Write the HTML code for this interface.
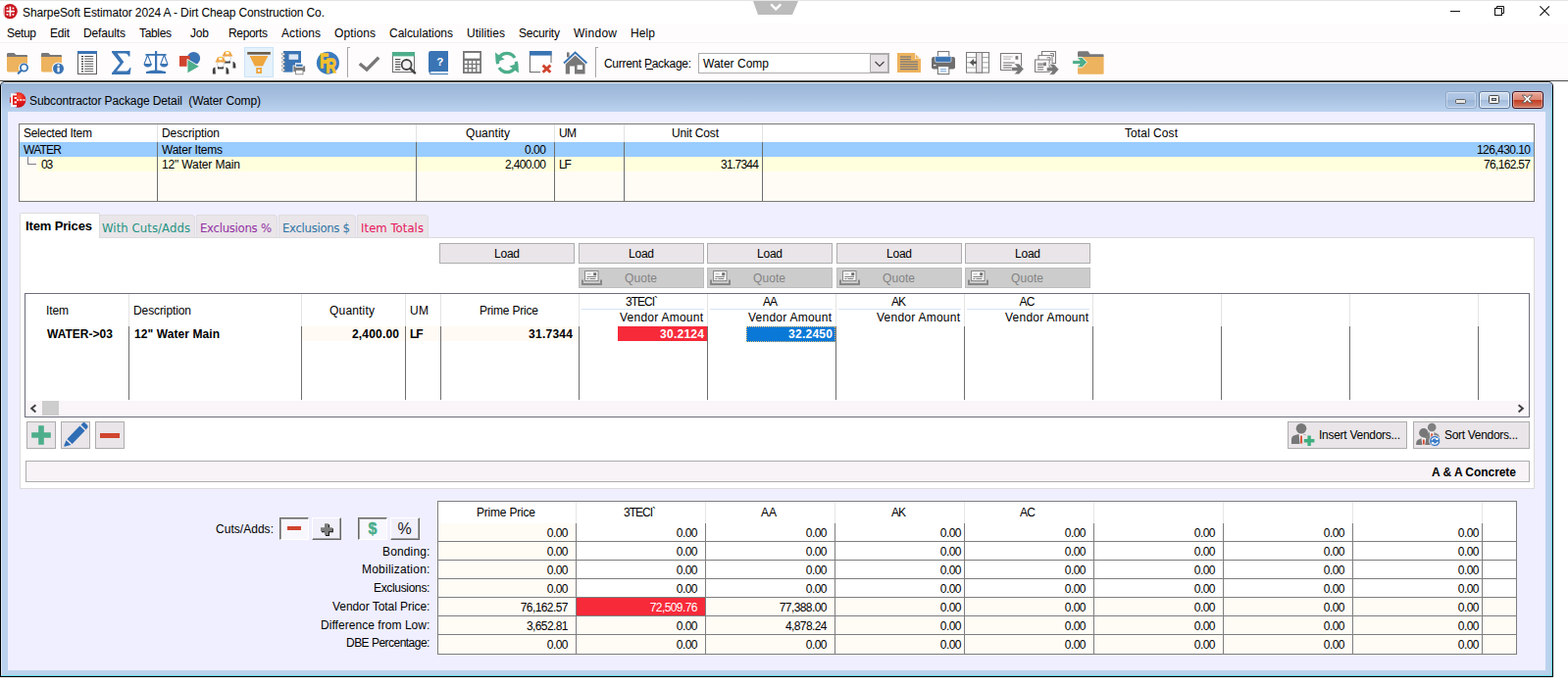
<!DOCTYPE html>
<html lang="en">
<head>
<meta charset="utf-8">
<title>SharpeSoft Estimator 2024 A - Dirt Cheap Construction Co.</title>
<style>
html,body{margin:0;padding:0;}
body{width:1599px;height:700px;overflow:hidden;background:#fff;position:relative;font-family:'Liberation Sans', sans-serif;font-size:12px;color:#000;}
body>div,body>svg,body>span{position:absolute;box-sizing:border-box;}
.t{white-space:pre;display:block;}
svg{overflow:visible;}
</style>
</head>
<body>
<div style="left:0px;top:0px;width:1599px;height:1px;background:#e4e6e4;"></div>
<svg style="left:766px;top:1px;" width="50" height="15" viewBox="0 0 50 15"><polygon points="2,0 48,0 42,14 7,14" fill="#bcbcbc"/><polyline points="20.2,3.4 25.2,8.4 30.2,3.4" fill="none" stroke="#fff" stroke-width="2.4"/></svg>
<svg style="left:2px;top:3px;" width="16" height="17" viewBox="0 0 16 17"><circle cx="8.2" cy="8.6" r="7.6" fill="#c8161d"/><rect x="0" y="0" width="1.6" height="17" fill="#fff"/><rect x="1.6" y="3" width="1.2" height="11" fill="#fff" opacity="0.7"/><rect x="4.4" y="7.8" width="8.6" height="1.6" fill="#fff"/><rect x="7.6" y="3.6" width="1.6" height="10" fill="#fff"/><rect x="4.6" y="4.6" width="1.7" height="1.7" fill="#fff"/><rect x="4.6" y="11" width="1.7" height="1.7" fill="#fff"/><rect x="10.6" y="4.6" width="1.7" height="1.7" fill="#fff"/><rect x="10.6" y="11" width="1.7" height="1.7" fill="#fff"/></svg>
<span class="t" style="left:23.00px;top:6px;font-size:12px;line-height:14px;letter-spacing:-0.122px;">SharpeSoft Estimator 2024 A - Dirt Cheap Construction Co.</span>
<div style="left:1479px;top:11px;width:10px;height:1px;background:#111;"></div>
<svg style="left:1524px;top:6px;" width="10" height="10" viewBox="0 0 10 10"><rect x="0.5" y="2.5" width="7" height="7" fill="none" stroke="#111"/><polyline points="2.5,2.5 2.5,0.5 9.5,0.5 9.5,7.5 7.5,7.5" fill="none" stroke="#111"/></svg>
<svg style="left:1570px;top:6px;" width="10" height="10" viewBox="0 0 10 10"><path d="M0.4,0.4 L9.9,9.9 M9.9,0.4 L0.4,9.9" stroke="#111" stroke-width="1.1" fill="none"/></svg>
<div style="left:0px;top:24px;width:1599px;height:58px;background:#fffcfd;"></div>
<div style="left:0px;top:43px;width:1599px;height:1px;background:#f6f2f4;"></div>
<span class="t" style="left:7.00px;top:27px;font-size:12px;line-height:14px;letter-spacing:-0.340px;">Setup</span>
<span class="t" style="left:51.00px;top:27px;font-size:12px;line-height:14px;letter-spacing:-0.229px;">Edit</span>
<span class="t" style="left:85.00px;top:27px;font-size:12px;line-height:14px;letter-spacing:-0.147px;">Defaults</span>
<span class="t" style="left:142.00px;top:27px;font-size:12px;line-height:14px;letter-spacing:-0.338px;">Tables</span>
<span class="t" style="left:194.00px;top:27px;font-size:12px;line-height:14px;letter-spacing:-0.180px;">Job</span>
<span class="t" style="left:233.00px;top:27px;font-size:12px;line-height:14px;letter-spacing:-0.339px;">Reports</span>
<span class="t" style="left:287.00px;top:27px;font-size:12px;line-height:14px;letter-spacing:0.107px;">Actions</span>
<span class="t" style="left:341.00px;top:27px;font-size:12px;line-height:14px;letter-spacing:0.107px;">Options</span>
<span class="t" style="left:397.00px;top:27px;font-size:12px;line-height:14px;letter-spacing:-0.034px;">Calculations</span>
<span class="t" style="left:476.00px;top:27px;font-size:12px;line-height:14px;letter-spacing:0.041px;">Utilities</span>
<span class="t" style="left:529.00px;top:27px;font-size:12px;line-height:14px;letter-spacing:-0.194px;">Security</span>
<span class="t" style="left:585.00px;top:27px;font-size:12px;line-height:14px;letter-spacing:0.263px;">Window</span>
<span class="t" style="left:643.00px;top:27px;font-size:12px;line-height:14px;letter-spacing:0.104px;">Help</span>
<div style="left:354px;top:48px;width:1px;height:31px;background:#a9a5a7;"></div>
<div style="left:355px;top:48px;width:2px;height:1px;background:#a9a5a7;"></div>
<div style="left:355px;top:49px;width:1px;height:30px;background:#fff;"></div>
<div style="left:607px;top:48px;width:1px;height:31px;background:#a9a5a7;"></div>
<div style="left:608px;top:48px;width:2px;height:1px;background:#a9a5a7;"></div>
<div style="left:608px;top:49px;width:1px;height:30px;background:#fff;"></div>
<span class="t" style="left:616.00px;top:58px;font-size:12px;line-height:14px;letter-spacing:-0.293px;">Current Package:</span>
<div style="left:659px;top:70px;width:7px;height:1px;background:#000;"></div>
<div style="left:712px;top:54px;width:195px;height:21px;background:#fff;border:1px solid #adadad;"></div>
<div style="left:887px;top:54px;width:20px;height:21px;background:#e6e2e5;border:2px solid #adadad;border-left-width:1px;"></div>
<svg style="left:891px;top:60.5px;" width="12" height="9" viewBox="0 0 12 9"><polyline points="1.5,2 6,6.5 10.5,2" fill="none" stroke="#444" stroke-width="1.2"/></svg>
<span class="t" style="left:717.00px;top:58px;font-size:12px;line-height:14px;letter-spacing:0.010px;">Water Comp</span>
<div style="left:0px;top:82px;width:1599px;height:1px;background:#4a4a4a;"></div>
<div style="left:0px;top:83px;width:1584px;height:608px;background:#bbd2ee;border:1px solid #000;border-top-color:#2e2e2e;border-radius:5px 5px 0 0;"></div>
<div style="left:1px;top:84px;width:1582px;height:30px;background:linear-gradient(#99b5d6,#a6bfdf 45%,#bad2ee);border-radius:4px 4px 0 0;"></div>
<div style="left:1px;top:689px;width:1582px;height:1px;background:#58d6f2;"></div>
<div style="left:1582px;top:90px;width:1px;height:600px;background:linear-gradient(rgba(88,214,242,0.3),#58d6f2 30px);"></div>
<div style="left:4px;top:84px;width:1576px;height:1px;background:rgba(255,255,255,0.92);"></div>
<div style="left:1px;top:88px;width:1px;height:601px;background:rgba(255,255,255,0.45);"></div>
<div style="left:8px;top:114px;width:1568px;height:570px;background:#efefff;"></div>
<svg style="left:10px;top:94px;" width="17" height="17" viewBox="0 0 17 17"><defs><radialGradient id="cg" cx="0.55" cy="0.3" r="0.7"><stop offset="0" stop-color="#ff5a3a"/><stop offset="0.5" stop-color="#e31a1a"/><stop offset="1" stop-color="#c80f14"/></radialGradient></defs><circle cx="8.6" cy="8" r="7.8" fill="url(#cg)"/><rect x="1" y="1.4" width="6" height="13.6" fill="#fff"/><rect x="3" y="3.4" width="4" height="9.6" fill="#e01818"/><rect x="4.6" y="5" width="2.4" height="2" fill="#fff"/><rect x="4.6" y="9.4" width="2.4" height="2" fill="#fff"/><path d="M7,8 L16.4,8" stroke="#fff" stroke-width="1.3" stroke-dasharray="2.2 1"/><rect x="0" y="5.4" width="1" height="5.6" fill="#e01818"/></svg>
<span class="t" style="left:30.00px;top:96px;font-size:12px;line-height:14px;letter-spacing:-0.106px;">Subcontractor Package Detail  (Water Comp)</span>
<div style="left:1474px;top:93px;width:32px;height:18px;border:1px solid #8fa9c9;border-radius:3px;background:linear-gradient(#b3c9e6 0%,#a9c1e0 48%,#9bb5d7 52%,#adc5e3 100%);box-shadow:inset 0 0 0 1px rgba(255,255,255,.4);"></div>
<div style="left:1484px;top:101px;width:11px;height:5px;background:#e6e6e6;border:1px solid #5f5f5f;border-radius:1.5px;"></div>
<div style="left:1508px;top:93px;width:32px;height:18px;border:1px solid #5f7898;border-radius:3px;background:linear-gradient(#cfdef0 0%,#bdd0e8 48%,#a3bbdb 52%,#c0d4ec 100%);box-shadow:inset 0 0 0 1px rgba(255,255,255,.65);"></div>
<div style="left:1518px;top:97px;width:11px;height:9px;background:#f4f4f4;border:1px solid #4a4a4a;border-radius:1.5px;"></div>
<div style="left:1521px;top:100px;width:5px;height:3px;background:#a9bfdc;border:1px solid #4a4a4a;"></div>
<div style="left:1542px;top:93px;width:32px;height:18px;border:1px solid #47131b;border-radius:3px;background:linear-gradient(#eaa99b 0%,#db8471 48%,#c33c1f 52%,#d17a64 100%);box-shadow:inset 0 0 0 1px rgba(255,255,255,.4);"></div>
<svg style="left:1551px;top:96px;" width="13" height="10" viewBox="0 0 13 10"><path d="M1.2,1.2 L4.6,1.2 L6.5,3.4 L8.4,1.2 L11.8,1.2 L8.3,5 L11.8,8.8 L8.4,8.8 L6.5,6.6 L4.6,8.8 L1.2,8.8 L4.7,5 Z" fill="#fff" stroke="#555" stroke-width="0.9" stroke-linejoin="round"/></svg>
<svg style="left:6px;top:52px;" width="24" height="24" viewBox="0 0 24 24"><path d="M1,3.4 Q1,2 2.4,2 L8.4,2 L10.4,4 L21,4 Q22,4 22,5 L22,6.2 L1,6.2 Z" fill="#787878"/><path d="M1,6 L22,6 L22,20 Q22,21.4 20.6,21.4 L2.4,21.4 Q1,21.4 1,20 Z" fill="#edb35e"/><circle cx="18.5" cy="17.5" r="5.6" fill="#fffcfd"/><circle cx="18.5" cy="17" r="3.6" fill="#fff" stroke="#3a74b4" stroke-width="1.8"/><path d="M15.8,19.8 L12.8,22.8" stroke="#3a74b4" stroke-width="2.2" stroke-linecap="round"/></svg>
<svg style="left:41px;top:52px;" width="24" height="24" viewBox="0 0 24 24"><path d="M1,3.4 Q1,2 2.4,2 L8.4,2 L10.4,4 L21,4 Q22,4 22,5 L22,6.2 L1,6.2 Z" fill="#787878"/><path d="M1,6 L22,6 L22,20 Q22,21.4 20.6,21.4 L2.4,21.4 Q1,21.4 1,20 Z" fill="#edb35e"/><circle cx="18.5" cy="18" r="6.6" fill="#fffcfd"/><circle cx="18.5" cy="18" r="5.5" fill="#3a74b4"/><rect x="17.5" y="16.8" width="2.2" height="4.6" fill="#fff"/><circle cx="18.6" cy="14.8" r="1.2" fill="#fff"/></svg>
<svg style="left:78px;top:52px;" width="22" height="24" viewBox="0 0 22 24"><rect x="1.5" y="0.5" width="19" height="23" fill="#fff" stroke="#5f5f5f"/><rect x="1" y="0" width="20" height="3" fill="#3a74b4"/><rect x="5" y="5.00" width="2" height="1.2" fill="#333"/><rect x="8.2" y="5.00" width="9" height="1" fill="#555"/><rect x="5" y="7.55" width="2" height="1.2" fill="#333"/><rect x="8.2" y="7.55" width="9" height="1" fill="#555"/><rect x="5" y="10.10" width="2" height="1.2" fill="#333"/><rect x="8.2" y="10.10" width="9" height="1" fill="#555"/><rect x="5" y="12.65" width="2" height="1.2" fill="#333"/><rect x="8.2" y="12.65" width="9" height="1" fill="#555"/><rect x="5" y="15.20" width="2" height="1.2" fill="#333"/><rect x="8.2" y="15.20" width="9" height="1" fill="#555"/><rect x="5" y="17.75" width="2" height="1.2" fill="#333"/><rect x="8.2" y="17.75" width="9" height="1" fill="#555"/><rect x="5" y="20.30" width="2" height="1.2" fill="#333"/><rect x="8.2" y="20.30" width="9" height="1" fill="#555"/></svg>
<svg style="left:113px;top:52px;" width="22" height="24" viewBox="0 0 22 24"><path d="M1,0 L19.5,0 L19.5,5.5 L18,5.5 Q17.5,2.6 14.5,2.6 L6.6,2.6 L13.3,11.2 L6,20.6 L15,20.6 Q18.2,20.6 19.2,17.2 L20.6,17.2 L19.6,24 L1,24 L1,22.6 L9.4,12.2 L1,1.4 Z" fill="#3a74b4"/></svg>
<svg style="left:146px;top:52px;" width="26" height="24" viewBox="0 0 26 24"><rect x="12" y="0" width="2.2" height="21" fill="#3a74b4"/><rect x="2.5" y="3" width="21" height="1.8" fill="#3a74b4"/><path d="M3,21 Q13,18 23,21 L23,23 L3,23 Z" fill="#3a74b4"/><path d="M4.6,4 L1.2,13 M4.6,4 L8,13 M21.4,4 L18,13 M21.4,4 L24.8,13" stroke="#3a74b4" stroke-width="1.1" fill="none"/><path d="M0.5,13 L9,13 Q8.6,16.4 4.7,16.4 Q0.9,16.4 0.5,13 Z" fill="#3a74b4"/><path d="M17,13 L25.5,13 Q25.1,16.4 21.2,16.4 Q17.4,16.4 17,13 Z" fill="#3a74b4"/></svg>
<svg style="left:182px;top:52px;" width="24" height="24" viewBox="0 0 24 24"><circle cx="15.5" cy="7.5" r="6.6" fill="#3a74b4"/><rect x="1" y="5" width="10.6" height="10.8" fill="#d0442e"/><path d="M9,8.4 L21.6,15.8 L9,23 Z" fill="#4dae8b" stroke="#fffcfd" stroke-width="0.9"/></svg>
<svg style="left:212px;top:48px;" width="36" height="32" viewBox="0 0 36 32"><rect x="20" y="13" width="2" height="4" fill="#3e3e3e"/><path d="M28.5,21.5 L28.099999999999998,17.3 Q27.5,14.9 25.299999999999997,14.700000000000001 L25.299999999999997,21.5 Z" fill="#3e3e3e"/><rect x="14.899999999999999" y="14.5" width="10.4" height="7" fill="#fff"/><rect x="16.9" y="14.1" width="6" height="2.4" fill="#3e3e3e"/><ellipse cx="19.9" cy="11.5" rx="3.5" ry="3.2" fill="#fff" stroke="#9aa6b4" stroke-width="0.5"/><path d="M14.7,9.5 L14.7,8.5 Q15.499999999999998,8.1 15.7,7.3 Q16.299999999999997,3.9 19.9,3.9 Q23.5,3.9 24.099999999999998,7.3 Q24.299999999999997,8.1 25.099999999999998,8.5 L25.099999999999998,9.5 Z" fill="#eea548"/><rect x="18.2" y="4.8" width="3.4" height="2.6" fill="#fffbe8"/><rect x="19.099999999999998" y="4.1" width="2" height="1" fill="#ffd21e"/><path d="M4.9,27.400000000000002 L4.9,23.200000000000003 Q4.9,20.8 7.5,20.6 L7.9,27.400000000000002 Z" fill="#3e3e3e"/><path d="M21.5,27.400000000000002 L21.1,23.200000000000003 Q20.5,20.8 18.3,20.6 L18.3,27.400000000000002 Z" fill="#3e3e3e"/><rect x="7.9" y="20.4" width="10.4" height="7" fill="#fff"/><rect x="9.9" y="20.0" width="6" height="2.4" fill="#3e3e3e"/><ellipse cx="12.9" cy="17.4" rx="3.5" ry="3.2" fill="#fff" stroke="#9aa6b4" stroke-width="0.5"/><path d="M7.7,15.4 L7.7,14.4 Q8.5,14.0 8.7,13.200000000000001 Q9.3,9.8 12.9,9.8 Q16.5,9.8 17.1,13.200000000000001 Q17.3,14.0 18.1,14.4 L18.1,15.4 Z" fill="#eea548"/><rect x="11.200000000000001" y="10.700000000000001" width="3.4" height="2.6" fill="#fffbe8"/><rect x="12.1" y="10.0" width="2" height="1" fill="#ffd21e"/></svg>
<div style="left:249px;top:48px;width:30px;height:31px;background:#e5f1fb;border:1px solid #cce4f7;"></div>
<svg style="left:252px;top:52px;" width="24" height="24" viewBox="0 0 24 24"><rect x="0.2" y="1" width="23.6" height="2.7" fill="#6b5d4a"/><path d="M2.6,5 L21.4,5 L16,15.4 L7.8,15.4 Z" fill="#eea63e"/><rect x="9.2" y="17" width="5.8" height="6" fill="#eea63e"/><circle cx="12.1" cy="20" r="1.3" fill="#f6f0ea"/></svg>
<svg style="left:287px;top:52px;" width="25" height="24" viewBox="0 0 25 24"><rect x="2" y="0" width="18" height="21.6" fill="#3a74b4"/><rect x="7.6" y="3.4" width="9.6" height="5.4" fill="#dfe8f5"/><rect x="0.4" y="2.2" width="3.2" height="2.2" rx="1" fill="#fff" stroke="#666" stroke-width="0.6"/><rect x="0.4" y="6.2" width="3.2" height="2.2" rx="1" fill="#fff" stroke="#666" stroke-width="0.6"/><rect x="0.4" y="10.2" width="3.2" height="2.2" rx="1" fill="#fff" stroke="#666" stroke-width="0.6"/><rect x="0.4" y="14.2" width="3.2" height="2.2" rx="1" fill="#fff" stroke="#666" stroke-width="0.6"/><rect x="0.4" y="18.2" width="3.2" height="2.2" rx="1" fill="#fff" stroke="#666" stroke-width="0.6"/><rect x="12" y="15" width="12.6" height="6.6" fill="#787878" stroke="#fffcfd" stroke-width="0.8"/><rect x="14.6" y="12.6" width="7.4" height="4" fill="#fff" stroke="#fffcfd" stroke-width="0.6"/><rect x="15" y="13.6" width="6.6" height="2.2" fill="#3a74b4"/><rect x="14.6" y="19.4" width="7.4" height="4.4" fill="#fff" stroke="#787878" stroke-width="0.8"/></svg>
<svg style="left:322px;top:52px" width="24" height="24" viewBox="0 0 24 24"><circle cx="12.4" cy="12.2" r="11.5" fill="#3b7bbd"/><text transform="translate(4.2,16.6) scale(0.74,1)" font-family="Liberation Sans, sans-serif" font-weight="bold" font-size="19.5" fill="#f4c12e" stroke="#f4c12e" stroke-width="1.3" stroke-linejoin="round">F</text><text transform="translate(10.6,21.6) scale(0.74,1)" font-family="Liberation Sans, sans-serif" font-weight="bold" font-size="19.5" fill="#f4c12e" stroke="#f4c12e" stroke-width="1.3" stroke-linejoin="round">R</text></svg>
<svg style="left:365px;top:56px;" width="23" height="18" viewBox="0 0 23 18"><path d="M1.8,9 L9,15 L21.2,2.6" fill="none" stroke="#777" stroke-width="3.4"/></svg>
<svg style="left:399px;top:52px;" width="26" height="24" viewBox="0 0 26 24"><rect x="1.4" y="1.6" width="22" height="20" fill="#fff" stroke="#666" stroke-width="1"/><rect x="1" y="1" width="23" height="4.4" fill="#4dae8b"/><rect x="4" y="8.0" width="5.4" height="1.1" fill="#444"/><rect x="4" y="10.6" width="5.4" height="1.1" fill="#444"/><rect x="4" y="13.2" width="5.4" height="1.1" fill="#444"/><rect x="4" y="15.8" width="5.4" height="1.1" fill="#444"/><rect x="4" y="18.4" width="5.4" height="1.1" fill="#444"/><circle cx="15.6" cy="14" r="5" fill="#f2f0f2" stroke="#444" stroke-width="1.8"/><path d="M19.4,17.8 L24,22.4" stroke="#444" stroke-width="2.6" stroke-linecap="round"/></svg>
<svg style="left:436px;top:52px;" width="22" height="24" viewBox="0 0 22 24"><path d="M1,2.4 Q1,0 3.4,0 L21,0 L21,21 L4,21 L2.4,23 Q1,22 1,20 Z" fill="#3a74b4"/><rect x="3.6" y="21" width="17.4" height="2" fill="#fff"/><rect x="2.2" y="23" width="18.8" height="1" fill="#3a74b4"/><text x="9.2" y="14.6" font-family="Liberation Sans, sans-serif" font-weight="700" font-size="11.5" fill="#fff">?</text></svg>
<svg style="left:471px;top:52px;" width="21" height="24" viewBox="0 0 21 24"><rect x="1" y="0" width="19" height="23" fill="#787878"/><rect x="2.8" y="2" width="15.4" height="5.6" fill="#fff"/><rect x="2.8" y="10.0" width="2.8" height="2.8" fill="#fff"/><rect x="7.0" y="10.0" width="2.8" height="2.8" fill="#fff"/><rect x="11.2" y="10.0" width="2.8" height="2.8" fill="#fff"/><rect x="2.8" y="14.2" width="2.8" height="2.8" fill="#fff"/><rect x="7.0" y="14.2" width="2.8" height="2.8" fill="#fff"/><rect x="11.2" y="14.2" width="2.8" height="2.8" fill="#fff"/><rect x="2.8" y="18.4" width="2.8" height="2.8" fill="#fff"/><rect x="7.0" y="18.4" width="2.8" height="2.8" fill="#fff"/><rect x="11.2" y="18.4" width="2.8" height="2.8" fill="#fff"/><rect x="15.4" y="10" width="2.8" height="2.8" fill="#fff"/><rect x="15.4" y="14.2" width="2.8" height="7" fill="#e8e8e8"/></svg>
<svg style="left:504px;top:52px;" width="26" height="24" viewBox="0 0 26 24"><path d="M3.6,13.2 A9.4,9.4 0 0 1 21,7" fill="none" stroke="#4dae8b" stroke-width="3.3"/><path d="M22.4,10.8 A9.4,9.4 0 0 1 5,17" fill="none" stroke="#4dae8b" stroke-width="3.3"/><path d="M1,1.6 L1.6,11.2 L10.6,8.6 Z" fill="#4dae8b"/><path d="M25,22.4 L24.4,12.8 L15.4,15.4 Z" fill="#4dae8b"/></svg>
<svg style="left:539px;top:52px;" width="25" height="24" viewBox="0 0 25 24"><rect x="1.4" y="0.6" width="21.6" height="21" fill="#fff" stroke="#666" stroke-width="1"/><rect x="1" y="0" width="22.6" height="4.6" fill="#3a74b4"/><rect x="12" y="12" width="13" height="12" fill="#fffcfd"/><path d="M14.6,14.6 L22.4,21.8 M22.4,14.6 L14.6,21.8" stroke="#d0442e" stroke-width="2.8"/></svg>
<svg style="left:574px;top:52px;" width="26" height="24" viewBox="0 0 26 24"><rect x="4" y="1.4" width="2.6" height="5" fill="#787878"/><path d="M12.6,4.6 L22.6,13.6 L22.6,23.6 L12,23.6 L12,15.4 L7,15.4 L7,23.6 L2.8,23.6 L2.8,13.6 Z" fill="#787878"/><rect x="14.6" y="14.4" width="5.4" height="4.6" fill="#fff"/><path d="M1,12.4 L12.6,1.6 L24.4,12.4" fill="none" stroke="#3a74b4" stroke-width="2"/></svg>
<svg style="left:914px;top:53px;" width="26" height="22" viewBox="0 0 26 22"><path d="M1,1 L19,1 L25,7 L25,21 L1,21 Z" fill="#edb35e"/><path d="M19,1 L19,7 L25,7 Z" fill="#fffcfd"/><path d="M19.6,2.4 L19.6,6.4 L23.6,6.4 Z" fill="#edb35e"/><rect x="4" y="4.4" width="11" height="1.3" fill="#7a7a7a"/><rect x="4" y="6.9" width="11" height="1.3" fill="#7a7a7a"/><rect x="4" y="9.4" width="18" height="1.3" fill="#7a7a7a"/><rect x="4" y="11.9" width="18" height="1.3" fill="#7a7a7a"/><rect x="4" y="14.4" width="18" height="1.3" fill="#7a7a7a"/><rect x="4" y="16.9" width="18" height="1.3" fill="#7a7a7a"/></svg>
<svg style="left:949px;top:52px;" width="26" height="24" viewBox="0 0 26 24"><rect x="1" y="6" width="24" height="12.6" rx="2" fill="#6e6e6e"/><rect x="7.4" y="0.6" width="11.4" height="6" fill="#fff" stroke="#6e6e6e" stroke-width="1"/><path d="M4.6,5.6 L21,5.6 L21,10 Q21,11.4 19.6,11.4 L6,11.4 Q4.6,11.4 4.6,10 Z" fill="#3a74b4" stroke="#fffcfd" stroke-width="0.6"/><rect x="7.4" y="15.6" width="11.4" height="8" fill="#fff" stroke="#6e6e6e" stroke-width="1"/><rect x="10" y="18.2" width="6" height="1" fill="#6fa0d8"/><rect x="10" y="20.4" width="6" height="1" fill="#6fa0d8"/><rect x="3" y="14" width="2.4" height="1.2" fill="#fff"/></svg>
<svg style="left:984px;top:53px;" width="26" height="22" viewBox="0 0 26 22"><rect x="1.5" y="0.5" width="23" height="20.6" fill="#fff" stroke="#7a7a7a"/><rect x="11.6" y="0.5" width="6" height="20.6" fill="#e6e2e5" stroke="#7a7a7a"/><path d="M2,5.6 L11,5.6 M18,5.6 L24,5.6 M2,10.8 L11,10.8 M18,10.8 L24,10.8 M2,16 L11,16 M18,16 L24,16" stroke="#8a8a8a" stroke-width="0.8"/><path d="M4.8,10.8 L9,7 L9,9.6 L12,9.6 L12,12 L9,12 L9,14.6 Z" fill="#555"/></svg>
<svg style="left:1019px;top:52px;" width="26" height="24" viewBox="0 0 26 24"><rect x="1.5" y="2.5" width="21" height="17" fill="#fffcfd" stroke="#7a7a7a" stroke-width="1"/><rect x="16.5" y="5.1" width="2.8" height="3.6" fill="#7a7a7a"/><rect x="4.1" y="5.5" width="9.5" height="0.9" fill="#aaa"/><rect x="4.1" y="7.7" width="7.6" height="0.9" fill="#aaa"/><rect x="4.1" y="11.5" width="11.6" height="1.1" fill="#777"/><rect x="4.1" y="14.1" width="8.8" height="1.1" fill="#777"/><rect x="4.1" y="16.5" width="8.8" height="1.1" fill="#777"/><path d="M12.6,16.4 L18.2,16.4 L15.2,13 L20.2,13 L25.0,18.4 L20.2,23.8 L15.2,23.8 L18.2,20.4 L12.6,20.4 Z" fill="#777" stroke="#fffcfd" stroke-width="0.5"/></svg>
<svg style="left:1054px;top:52px;" width="26" height="24" viewBox="0 0 26 24"><rect x="8.5" y="0.5" width="14" height="12" fill="#fffcfd" stroke="#7a7a7a"/><path d="M17,2.6 L20.4,2.6 L20.4,6" fill="none" stroke="#7a7a7a"/><rect x="5" y="4.6" width="14" height="12" fill="#fffcfd" stroke="#7a7a7a"/><path d="M13.6,6.8 L17,6.8 L17,10" fill="none" stroke="#7a7a7a"/><rect x="1.5" y="9" width="14.6" height="12.4" fill="#fffcfd" stroke="#7a7a7a" stroke-width="1"/><rect x="10.100000000000001" y="11.6" width="2.8" height="3.6" fill="#7a7a7a"/><rect x="4.1" y="12" width="6.6" height="0.9" fill="#aaa"/><rect x="4.1" y="14.2" width="5.3" height="0.9" fill="#aaa"/><rect x="4.1" y="13.399999999999999" width="8.0" height="1.1" fill="#777"/><rect x="4.1" y="15.999999999999998" width="6.1" height="1.1" fill="#777"/><rect x="4.1" y="18.4" width="6.1" height="1.1" fill="#777"/><path d="M13.4,16.8 L19.0,16.8 L16.0,13.4 L21.0,13.4 L25.8,18.8 L21.0,24.200000000000003 L16.0,24.200000000000003 L19.0,20.8 L13.4,20.8 Z" fill="#777" stroke="#fffcfd" stroke-width="0.5"/></svg>
<svg style="left:1093px;top:52px;" width="34" height="24" viewBox="0 0 34 24"><path d="M6,1.6 Q6,0.2 7.4,0.2 L16.6,0.2 L18.6,3.2 L31.6,3.2 Q32.6,3.2 32.6,4.4 L32.6,6 L6,6 Z" fill="#787878"/><path d="M6,6 L32.6,6 L32.6,22.4 Q32.6,23.8 31.2,23.8 L7.4,23.8 Q6,23.8 6,22.4 Z" fill="#edb35e"/><path d="M0.6,9.6 L8,9.6 L5,6.4 L10.6,6.4 L15.6,11.6 L10.6,16.8 L5,16.8 L8,13.6 L0.6,13.6 Z" fill="#4dae8b" stroke="#fffcfd" stroke-width="0.9"/></svg>
<div style="left:19px;top:126px;width:1546px;height:80px;background:#fffcf6;border:1px solid #7a7a7a;"></div>
<div style="left:20px;top:127px;width:1544px;height:18px;background:#fff;"></div>
<div style="left:20px;top:145px;width:1544px;height:15px;background:#99ccff;"></div>
<div style="left:38px;top:160px;width:1526px;height:15px;background:#ffffdd;"></div>
<div style="left:160px;top:127px;width:1px;height:18px;background:#e2e2e2;"></div>
<div style="left:160px;top:145px;width:1px;height:60px;background:#6e6e6e;"></div>
<div style="left:424px;top:127px;width:1px;height:18px;background:#e2e2e2;"></div>
<div style="left:424px;top:145px;width:1px;height:60px;background:#6e6e6e;"></div>
<div style="left:565px;top:127px;width:1px;height:18px;background:#e2e2e2;"></div>
<div style="left:565px;top:145px;width:1px;height:60px;background:#6e6e6e;"></div>
<div style="left:636px;top:127px;width:1px;height:18px;background:#e2e2e2;"></div>
<div style="left:636px;top:145px;width:1px;height:60px;background:#6e6e6e;"></div>
<div style="left:777px;top:127px;width:1px;height:18px;background:#e2e2e2;"></div>
<div style="left:777px;top:145px;width:1px;height:60px;background:#6e6e6e;"></div>
<div style="left:28px;top:160px;width:1px;height:8px;background:#808080;"></div>
<div style="left:28px;top:167px;width:9px;height:1px;background:#808080;"></div>
<span class="t" style="left:24.00px;top:129px;font-size:12px;line-height:14px;letter-spacing:-0.281px;">Selected Item</span>
<span class="t" style="left:165.00px;top:129px;font-size:12px;line-height:14px;letter-spacing:-0.103px;">Description</span>
<span class="t" style="left:475.00px;top:129px;font-size:12px;line-height:14px;letter-spacing:0.042px;">Quantity</span>
<span class="t" style="left:570.00px;top:129px;font-size:12px;line-height:14px;letter-spacing:-0.672px;">UM</span>
<span class="t" style="left:685.00px;top:129px;font-size:12px;line-height:14px;letter-spacing:-0.170px;">Unit Cost</span>
<span class="t" style="left:1147.00px;top:129px;font-size:12px;line-height:14px;letter-spacing:0.071px;">Total Cost</span>
<span class="t" style="left:24.00px;top:146px;font-size:12px;line-height:14px;letter-spacing:-0.750px;">WATER</span>
<span class="t" style="left:165.00px;top:146px;font-size:12px;line-height:14px;letter-spacing:-0.223px;">Water Items</span>
<span class="t" style="left:535.00px;top:146px;font-size:12px;line-height:14px;letter-spacing:-0.453px;">0.00</span>
<span class="t" style="left:1506.00px;top:146px;font-size:12px;line-height:14px;letter-spacing:-0.562px;">126,430.10</span>
<span class="t" style="left:42.00px;top:161px;font-size:12px;line-height:14px;letter-spacing:-1.200px;">03</span>
<span class="t" style="left:165.00px;top:161px;font-size:12px;line-height:14px;letter-spacing:-0.142px;">12" Water Main</span>
<span class="t" style="left:515.00px;top:161px;font-size:12px;line-height:14px;letter-spacing:-0.674px;">2,400.00</span>
<span class="t" style="left:570.00px;top:161px;font-size:12px;line-height:14px;letter-spacing:-1.200px;">LF</span>
<span class="t" style="left:735.00px;top:161px;font-size:12px;line-height:14px;letter-spacing:-0.732px;">31.7344</span>
<span class="t" style="left:1513.00px;top:161px;font-size:12px;line-height:14px;letter-spacing:-0.674px;">76,162.57</span>
<div style="left:20px;top:242px;width:1545px;height:257px;background:#fff;border:1px solid #dcdadc;"></div>
<div style="left:101px;top:219px;width:98px;height:23px;background:#e9e5e8;border:1px solid #e0dce0;border-bottom:none;border-radius:1px 4px 0 0;"></div>
<span class="t" style="left:104.00px;top:225px;font-size:13px;line-height:15px;color:#1f9383;letter-spacing:0.064px;font-family:'DejaVu Sans Condensed', 'DejaVu Sans', 'Liberation Sans', sans-serif;">With Cuts/Adds</span>
<div style="left:200px;top:219px;width:83px;height:23px;background:#e9e5e8;border:1px solid #e0dce0;border-bottom:none;border-radius:1px 4px 0 0;"></div>
<span class="t" style="left:204.00px;top:225px;font-size:13px;line-height:15px;color:#9230a4;letter-spacing:-0.274px;font-family:'DejaVu Sans Condensed', 'DejaVu Sans', 'Liberation Sans', sans-serif;">Exclusions %</span>
<div style="left:284px;top:219px;width:79px;height:23px;background:#e9e5e8;border:1px solid #e0dce0;border-bottom:none;border-radius:1px 4px 0 0;"></div>
<span class="t" style="left:288.00px;top:225px;font-size:13px;line-height:15px;color:#2f74a6;letter-spacing:-0.304px;font-family:'DejaVu Sans Condensed', 'DejaVu Sans', 'Liberation Sans', sans-serif;">Exclusions $</span>
<div style="left:364px;top:219px;width:73px;height:23px;background:#e9e5e8;border:1px solid #e0dce0;border-bottom:none;border-radius:1px 4px 0 0;"></div>
<span class="t" style="left:368.00px;top:225px;font-size:13px;line-height:15px;color:#e8155c;letter-spacing:0.048px;font-family:'DejaVu Sans Condensed', 'DejaVu Sans', 'Liberation Sans', sans-serif;">Item Totals</span>
<div style="left:20px;top:217px;width:82px;height:26px;background:#fff;border:1px solid #dcdcdc;border-bottom:none;border-radius:2px 2px 0 0;"></div>
<span class="t" style="left:26.00px;top:223px;font-size:13px;line-height:15px;font-weight:700;letter-spacing:-0.138px;">Item Prices</span>
<div style="left:448px;top:248px;width:138px;height:21px;background:#e9e5e8;border:1px solid #adadad;"></div>
<span class="t" style="left:504.00px;top:252px;font-size:12px;line-height:14px;letter-spacing:-0.234px;">Load</span>
<div style="left:590px;top:248px;width:128px;height:21px;background:#e9e5e8;border:1px solid #adadad;"></div>
<span class="t" style="left:641.00px;top:252px;font-size:12px;line-height:14px;letter-spacing:-0.234px;">Load</span>
<div style="left:590px;top:273px;width:128px;height:21px;background:#cccccc;border:1px solid #bdbdbd;"></div>
<span class="t" style="left:637.00px;top:277px;font-size:12px;line-height:14px;color:#838383;letter-spacing:0.074px;">Quote</span>
<svg style="left:593px;top:276px;" width="21" height="16" viewBox="0 0 21 16"><path d="M1,9.4 L1,14 L20,14 L20,9.4" fill="none" stroke="#888" stroke-width="2"/><rect x="3.6" y="0.6" width="13.4" height="10" fill="#fbfbfb" stroke="#7d7d7d" stroke-width="0.9"/><rect x="12.2" y="2.2" width="3" height="3" fill="#6e6e6e"/><rect x="5.6" y="2.8" width="4" height="1.6" fill="#c9c9c9"/><rect x="5.4" y="5.9" width="9.6" height="1" fill="#777"/><rect x="5.4" y="8" width="2" height="1" fill="#777"/><rect x="8.4" y="8" width="6" height="1" fill="#777"/></svg>
<div style="left:721px;top:248px;width:128px;height:21px;background:#e9e5e8;border:1px solid #adadad;"></div>
<span class="t" style="left:772.00px;top:252px;font-size:12px;line-height:14px;letter-spacing:-0.234px;">Load</span>
<div style="left:721px;top:273px;width:128px;height:21px;background:#cccccc;border:1px solid #bdbdbd;"></div>
<span class="t" style="left:768.00px;top:277px;font-size:12px;line-height:14px;color:#838383;letter-spacing:0.074px;">Quote</span>
<svg style="left:724px;top:276px;" width="21" height="16" viewBox="0 0 21 16"><path d="M1,9.4 L1,14 L20,14 L20,9.4" fill="none" stroke="#888" stroke-width="2"/><rect x="3.6" y="0.6" width="13.4" height="10" fill="#fbfbfb" stroke="#7d7d7d" stroke-width="0.9"/><rect x="12.2" y="2.2" width="3" height="3" fill="#6e6e6e"/><rect x="5.6" y="2.8" width="4" height="1.6" fill="#c9c9c9"/><rect x="5.4" y="5.9" width="9.6" height="1" fill="#777"/><rect x="5.4" y="8" width="2" height="1" fill="#777"/><rect x="8.4" y="8" width="6" height="1" fill="#777"/></svg>
<div style="left:853px;top:248px;width:128px;height:21px;background:#e9e5e8;border:1px solid #adadad;"></div>
<span class="t" style="left:904.00px;top:252px;font-size:12px;line-height:14px;letter-spacing:-0.234px;">Load</span>
<div style="left:853px;top:273px;width:128px;height:21px;background:#cccccc;border:1px solid #bdbdbd;"></div>
<span class="t" style="left:900.00px;top:277px;font-size:12px;line-height:14px;color:#838383;letter-spacing:0.074px;">Quote</span>
<svg style="left:856px;top:276px;" width="21" height="16" viewBox="0 0 21 16"><path d="M1,9.4 L1,14 L20,14 L20,9.4" fill="none" stroke="#888" stroke-width="2"/><rect x="3.6" y="0.6" width="13.4" height="10" fill="#fbfbfb" stroke="#7d7d7d" stroke-width="0.9"/><rect x="12.2" y="2.2" width="3" height="3" fill="#6e6e6e"/><rect x="5.6" y="2.8" width="4" height="1.6" fill="#c9c9c9"/><rect x="5.4" y="5.9" width="9.6" height="1" fill="#777"/><rect x="5.4" y="8" width="2" height="1" fill="#777"/><rect x="8.4" y="8" width="6" height="1" fill="#777"/></svg>
<div style="left:984px;top:248px;width:128px;height:21px;background:#e9e5e8;border:1px solid #adadad;"></div>
<span class="t" style="left:1035.00px;top:252px;font-size:12px;line-height:14px;letter-spacing:-0.234px;">Load</span>
<div style="left:984px;top:273px;width:128px;height:21px;background:#cccccc;border:1px solid #bdbdbd;"></div>
<span class="t" style="left:1031.00px;top:277px;font-size:12px;line-height:14px;color:#838383;letter-spacing:0.074px;">Quote</span>
<svg style="left:987px;top:276px;" width="21" height="16" viewBox="0 0 21 16"><path d="M1,9.4 L1,14 L20,14 L20,9.4" fill="none" stroke="#888" stroke-width="2"/><rect x="3.6" y="0.6" width="13.4" height="10" fill="#fbfbfb" stroke="#7d7d7d" stroke-width="0.9"/><rect x="12.2" y="2.2" width="3" height="3" fill="#6e6e6e"/><rect x="5.6" y="2.8" width="4" height="1.6" fill="#c9c9c9"/><rect x="5.4" y="5.9" width="9.6" height="1" fill="#777"/><rect x="5.4" y="8" width="2" height="1" fill="#777"/><rect x="8.4" y="8" width="6" height="1" fill="#777"/></svg>
<div style="left:25px;top:299px;width:1535px;height:127px;background:#fff;border:1px solid #6e6e7c;"></div>
<div style="left:308px;top:333px;width:105px;height:15px;background:#fffaf4;"></div>
<div style="left:414px;top:333px;width:35px;height:15px;background:#fffaf4;"></div>
<div style="left:450px;top:333px;width:140px;height:15px;background:#fffaf4;"></div>
<div style="left:131px;top:300px;width:1px;height:33px;background:#e4e4e4;"></div>
<div style="left:131px;top:333px;width:1px;height:75px;background:#6e6e6e;"></div>
<div style="left:307px;top:300px;width:1px;height:33px;background:#e4e4e4;"></div>
<div style="left:307px;top:333px;width:1px;height:75px;background:#6e6e6e;"></div>
<div style="left:413px;top:300px;width:1px;height:33px;background:#e4e4e4;"></div>
<div style="left:413px;top:333px;width:1px;height:75px;background:#6e6e6e;"></div>
<div style="left:449px;top:300px;width:1px;height:33px;background:#e4e4e4;"></div>
<div style="left:449px;top:333px;width:1px;height:75px;background:#6e6e6e;"></div>
<div style="left:590px;top:300px;width:1px;height:33px;background:#e4e4e4;"></div>
<div style="left:590px;top:333px;width:1px;height:75px;background:#6e6e6e;"></div>
<div style="left:721px;top:300px;width:1px;height:33px;background:#e4e4e4;"></div>
<div style="left:721px;top:333px;width:1px;height:75px;background:#6e6e6e;"></div>
<div style="left:852px;top:300px;width:1px;height:33px;background:#e4e4e4;"></div>
<div style="left:852px;top:333px;width:1px;height:75px;background:#6e6e6e;"></div>
<div style="left:983px;top:300px;width:1px;height:33px;background:#e4e4e4;"></div>
<div style="left:983px;top:333px;width:1px;height:75px;background:#6e6e6e;"></div>
<div style="left:1114px;top:300px;width:1px;height:33px;background:#e4e4e4;"></div>
<div style="left:1114px;top:333px;width:1px;height:75px;background:#6e6e6e;"></div>
<div style="left:1245px;top:300px;width:1px;height:33px;background:#e4e4e4;"></div>
<div style="left:1245px;top:333px;width:1px;height:75px;background:#6e6e6e;"></div>
<div style="left:1376px;top:300px;width:1px;height:33px;background:#e4e4e4;"></div>
<div style="left:1376px;top:333px;width:1px;height:75px;background:#6e6e6e;"></div>
<div style="left:1507px;top:300px;width:1px;height:33px;background:#e4e4e4;"></div>
<div style="left:1507px;top:333px;width:1px;height:75px;background:#6e6e6e;"></div>
<div style="left:593px;top:315px;width:125px;height:1px;background:#d3e4f6;"></div>
<div style="left:724px;top:315px;width:125px;height:1px;background:#d3e4f6;"></div>
<div style="left:855px;top:315px;width:125px;height:1px;background:#d3e4f6;"></div>
<div style="left:986px;top:315px;width:125px;height:1px;background:#d3e4f6;"></div>
<span class="t" style="left:47.00px;top:310px;font-size:12px;line-height:14px;letter-spacing:-0.115px;">Item</span>
<span class="t" style="left:136.00px;top:310px;font-size:12px;line-height:14px;letter-spacing:-0.103px;">Description</span>
<span class="t" style="left:336.00px;top:310px;font-size:12px;line-height:14px;letter-spacing:0.185px;">Quantity</span>
<span class="t" style="left:418.00px;top:310px;font-size:12px;line-height:14px;letter-spacing:0.328px;">UM</span>
<span class="t" style="left:489.00px;top:310px;font-size:12px;line-height:14px;letter-spacing:-0.202px;">Prime Price</span>
<span class="t" style="left:638.00px;top:301px;font-size:12px;line-height:14px;letter-spacing:-1.003px;">3TECI`</span>
<span class="t" style="left:778.00px;top:301px;font-size:12px;line-height:14px;letter-spacing:-1.016px;">AA</span>
<span class="t" style="left:909.00px;top:301px;font-size:12px;line-height:14px;letter-spacing:-1.016px;">AK</span>
<span class="t" style="left:1039.50px;top:301px;font-size:12px;line-height:14px;letter-spacing:-0.672px;">AC</span>
<span class="t" style="left:632.00px;top:317px;font-size:12px;line-height:14px;letter-spacing:0.245px;">Vendor Amount</span>
<span class="t" style="left:763.00px;top:317px;font-size:12px;line-height:14px;letter-spacing:0.245px;">Vendor Amount</span>
<span class="t" style="left:894.00px;top:317px;font-size:12px;line-height:14px;letter-spacing:0.245px;">Vendor Amount</span>
<span class="t" style="left:1025.00px;top:317px;font-size:12px;line-height:14px;letter-spacing:0.245px;">Vendor Amount</span>
<span class="t" style="left:48.00px;top:334px;font-size:12px;line-height:14px;font-weight:700;letter-spacing:0.025px;">WATER-&gt;03</span>
<span class="t" style="left:137.00px;top:334px;font-size:12px;line-height:14px;font-weight:700;letter-spacing:0.082px;">12" Water Main</span>
<span class="t" style="left:359.00px;top:334px;font-size:12px;line-height:14px;font-weight:700;letter-spacing:0.183px;">2,400.00</span>
<span class="t" style="left:418.00px;top:334px;font-size:12px;line-height:14px;font-weight:700;letter-spacing:-1.200px;">LF</span>
<span class="t" style="left:539.00px;top:334px;font-size:12px;line-height:14px;font-weight:700;letter-spacing:0.268px;">31.7344</span>
<div style="left:630px;top:333px;width:91px;height:15px;background:#f72a3a;"></div>
<span class="t" style="left:673.00px;top:334px;font-size:12px;line-height:14px;font-weight:700;color:#fff;letter-spacing:0.268px;">30.2124</span>
<div style="left:761px;top:333px;width:91px;height:16px;background:#0a78d7;border:1px dotted #f0c070;"></div>
<span class="t" style="left:804.00px;top:334px;font-size:12px;line-height:14px;font-weight:700;color:#fff;letter-spacing:0.268px;">32.2450</span>
<div style="left:26px;top:409px;width:1533px;height:16px;background:#f9f5f8;"></div>
<div style="left:43px;top:409px;width:17px;height:15px;background:#cdcdcd;"></div>
<svg style="left:30px;top:412px;" width="8" height="10" viewBox="0 0 8 10"><polyline points="6.4,1.2 2.2,4.8 6.4,8.4" fill="none" stroke="#404040" stroke-width="2"/></svg>
<svg style="left:1547px;top:412px;" width="8" height="10" viewBox="0 0 8 10"><polyline points="1.6,1.2 5.8,4.8 1.6,8.4" fill="none" stroke="#404040" stroke-width="2"/></svg>
<div style="left:27px;top:430px;width:30px;height:28px;background:#e9e5e8;border:1px solid #adadad;"></div>
<div style="left:62px;top:430px;width:30px;height:28px;background:#e9e5e8;border:1px solid #adadad;"></div>
<div style="left:97px;top:430px;width:30px;height:28px;background:#e9e5e8;border:1px solid #adadad;"></div>
<svg style="left:31px;top:434px;" width="22" height="20" viewBox="0 0 22 20"><path d="M8.2,0.2 L13.8,0.2 L13.8,7.2 L20.8,7.2 L20.8,12.8 L13.8,12.8 L13.8,19.8 L8.2,19.8 L8.2,12.8 L1.2,12.8 L1.2,7.2 L8.2,7.2 Z" fill="#4dae8b"/></svg>
<svg style="left:64px;top:431px;" width="26" height="26" viewBox="0 0 26 26"><path d="M17.4,3.6 L22.6,8.6 L9.6,22 L4.4,17 Z" fill="#2f6db5"/><path d="M3.4,18.2 L8.4,23 L2.6,24.6 Q0.8,25 1.4,23.4 Z" fill="#2f6db5"/><path d="M18.6,2.4 L20.4,0.6 Q21.6,-0.4 22.8,0.6 L25.2,3 Q26.2,4.2 25.2,5.4 L23.6,7.4 Z" fill="#2f6db5"/></svg>
<div style="left:102px;top:442px;width:20px;height:5px;background:#d0442e;"></div>
<div style="left:1313px;top:430px;width:122px;height:28px;background:#e9e5e8;border:1px solid #adadad;"></div>
<div style="left:1441px;top:430px;width:119px;height:28px;background:#e9e5e8;border:1px solid #adadad;"></div>
<svg style="left:1316px;top:431px;" width="26" height="25" viewBox="0 0 26 25"><circle cx="11" cy="6.2" r="5.3" fill="#777"/><path d="M1,21.9 L1,17.3 Q1,13.9 5,13.100000000000001 L8.4,11.9 L13.6,11.9 L17,13.100000000000001 Q21,13.9 21,17.3 L21,21.9 Z" fill="#777"/><path d="M8.6,11.9 L13.4,11.9 L12.4,21.9 L9.6,21.9 Z" fill="#f4f4f4"/><rect x="10.1" y="13.5" width="1.8" height="8.0" fill="#d9442e"/><rect x="12.4" y="12.6" width="12" height="12" fill="#e9e5e8"/><path d="M17.4,13.4 L20.8,13.4 L20.8,17 L24.4,17 L24.4,20.4 L20.8,20.4 L20.8,24 L17.4,24 L17.4,20.4 L13.8,20.4 L13.8,17 L17.4,17 Z" fill="#3fae7e"/></svg>
<svg style="left:1443px;top:431px;" width="28" height="25" viewBox="0 0 28 25"><circle cx="17.2" cy="5" r="4.3" fill="#808080"/><path d="M9.6,18.1 L9.6,15.100000000000001 Q9.6,11.700000000000001 13.6,10.900000000000002 L14.6,9.700000000000001 L19.8,9.700000000000001 L20.799999999999997,10.900000000000002 Q24.799999999999997,11.700000000000001 24.799999999999997,15.100000000000001 L24.799999999999997,18.1 Z" fill="#808080"/><path d="M14.799999999999999,9.700000000000001 L19.599999999999998,9.700000000000001 L18.599999999999998,18.1 L15.799999999999999,18.1 Z" fill="#f4f4f4"/><rect x="16.3" y="11.3" width="1.8" height="6.4" fill="#d9442e"/><circle cx="8.8" cy="10.8" r="4.7" fill="#777"/><path d="M1.200000000000001,22.9 L1.200000000000001,21.3 Q1.200000000000001,17.900000000000002 5.200000000000001,17.1 L6.200000000000001,15.9 L11.4,15.9 L12.399999999999999,17.1 Q16.4,17.900000000000002 16.4,21.3 L16.4,22.9 Z" fill="#777"/><path d="M6.4,15.9 L11.200000000000001,15.9 L10.200000000000001,22.9 L7.4,22.9 Z" fill="#f4f4f4"/><rect x="7.9" y="17.5" width="1.8" height="5.0" fill="#d9442e"/><circle cx="20.2" cy="19" r="5.6" fill="#3b7bc8" stroke="#e9e5e8" stroke-width="0.9"/><path d="M17,18.2 A3.3,3.3 0 0 1 22.8,17.2 M23.4,19.8 A3.3,3.3 0 0 1 17.6,20.8" fill="none" stroke="#fff" stroke-width="1.2"/><path d="M23.6,15.2 L23.6,18 L20.8,18 Z M16.8,22.8 L16.8,20 L19.6,20 Z" fill="#fff"/></svg>
<span class="t" style="left:1345.00px;top:437px;font-size:12px;line-height:14px;letter-spacing:-0.274px;">Insert Vendors...</span>
<span class="t" style="left:1473.00px;top:437px;font-size:12px;line-height:14px;letter-spacing:-0.314px;">Sort Vendors...</span>
<div style="left:26px;top:470px;width:1534px;height:22px;background:#f7f3f6;border:1px solid #adadad;"></div>
<span class="t" style="left:1460.00px;top:475px;font-size:12px;line-height:14px;font-weight:700;letter-spacing:-0.053px;">A &amp; A Concrete</span>
<span class="t" style="left:220.00px;top:533px;font-size:12px;line-height:14px;letter-spacing:0.033px;">Cuts/Adds:</span>
<div style="left:285px;top:528px;width:30px;height:23px;background:#f8f7fd;border:1px solid #696969;border-right-color:#fff;border-bottom-color:#fff;box-shadow:inset 1px 1px 0 #a0a0a0;"></div>
<div style="left:318px;top:528px;width:30px;height:23px;background:#f1f0fa;border:1px solid #fff;border-right-color:#696969;border-bottom-color:#696969;box-shadow:inset -1px -1px 0 #a0a0a0;"></div>
<div style="left:365px;top:528px;width:30px;height:23px;background:#f8f7fd;border:1px solid #696969;border-right-color:#fff;border-bottom-color:#fff;box-shadow:inset 1px 1px 0 #a0a0a0;"></div>
<div style="left:398px;top:528px;width:30px;height:23px;background:#f1f0fa;border:1px solid #fff;border-right-color:#696969;border-bottom-color:#696969;box-shadow:inset -1px -1px 0 #a0a0a0;"></div>
<div style="left:293px;top:537px;width:14px;height:4px;background:#d0442e;"></div>
<svg style="left:326px;top:533px;" width="15" height="15" viewBox="0 0 15 15"><path d="M6,2.2 L10,2.2 L10,6.2 L13.8,6.2 L13.8,10.2 L10,10.2 L10,14 L6,14 L6,10.2 L2,10.2 L2,6.2 L6,6.2 Z" fill="#111"/><path d="M5,1.2 L9,1.2 L9,5.2 L12.8,5.2 L12.8,9.2 L9,9.2 L9,13 L5,13 L5,9.2 L1,9.2 L1,5.2 L5,5.2 Z" fill="#7d7d7d"/></svg>
<span class="t" style="left:375.45px;top:531px;font-size:16px;line-height:18px;font-weight:700;color:#48ad89;-webkit-text-stroke:0.4px #48ad89;">$</span>
<span class="t" style="left:405.48px;top:531px;font-size:16px;line-height:18px;color:#1a1a1a;">%</span>
<span class="t" style="left:390.00px;top:556px;font-size:12px;line-height:14px;letter-spacing:0.146px;">Bonding:</span>
<span class="t" style="left:369.00px;top:574px;font-size:12px;line-height:14px;letter-spacing:0.225px;">Mobilization:</span>
<span class="t" style="left:381.00px;top:593px;font-size:12px;line-height:14px;letter-spacing:-0.330px;">Exclusions:</span>
<span class="t" style="left:339.00px;top:612px;font-size:12px;line-height:14px;letter-spacing:-0.062px;">Vendor Total Price:</span>
<span class="t" style="left:327.00px;top:631px;font-size:12px;line-height:14px;letter-spacing:0.047px;">Difference from Low:</span>
<span class="t" style="left:353.00px;top:649px;font-size:12px;line-height:14px;letter-spacing:-0.523px;">DBE Percentage:</span>
<div style="left:446px;top:511px;width:1101px;height:157px;background:#fff;border:1px solid #7e7e7e;"></div>
<div style="left:447px;top:534px;width:140px;height:133px;background:#fffcf6;"></div>
<div style="left:588px;top:610px;width:958px;height:57px;background:#fffcf6;"></div>
<div style="left:588px;top:610px;width:131px;height:18px;background:#f72a3a;"></div>
<div style="left:447px;top:552px;width:1099px;height:1px;background:#7e7e7e;"></div>
<div style="left:447px;top:571px;width:1099px;height:1px;background:#7e7e7e;"></div>
<div style="left:447px;top:590px;width:1099px;height:1px;background:#7e7e7e;"></div>
<div style="left:447px;top:609px;width:1099px;height:1px;background:#7e7e7e;"></div>
<div style="left:447px;top:628px;width:1099px;height:1px;background:#7e7e7e;"></div>
<div style="left:447px;top:647px;width:1099px;height:1px;background:#7e7e7e;"></div>
<div style="left:587px;top:512px;width:1px;height:22px;background:#e6e6e6;"></div>
<div style="left:587px;top:534px;width:1px;height:133px;background:#7e7e7e;"></div>
<div style="left:719px;top:512px;width:1px;height:22px;background:#e6e6e6;"></div>
<div style="left:719px;top:534px;width:1px;height:133px;background:#7e7e7e;"></div>
<div style="left:851px;top:512px;width:1px;height:22px;background:#e6e6e6;"></div>
<div style="left:851px;top:534px;width:1px;height:133px;background:#7e7e7e;"></div>
<div style="left:983px;top:512px;width:1px;height:22px;background:#e6e6e6;"></div>
<div style="left:983px;top:534px;width:1px;height:133px;background:#7e7e7e;"></div>
<div style="left:1115px;top:512px;width:1px;height:22px;background:#e6e6e6;"></div>
<div style="left:1115px;top:534px;width:1px;height:133px;background:#7e7e7e;"></div>
<div style="left:1247px;top:512px;width:1px;height:22px;background:#e6e6e6;"></div>
<div style="left:1247px;top:534px;width:1px;height:133px;background:#7e7e7e;"></div>
<div style="left:1379px;top:512px;width:1px;height:22px;background:#e6e6e6;"></div>
<div style="left:1379px;top:534px;width:1px;height:133px;background:#7e7e7e;"></div>
<div style="left:1511px;top:512px;width:1px;height:22px;background:#e6e6e6;"></div>
<div style="left:1511px;top:534px;width:1px;height:133px;background:#7e7e7e;"></div>
<span class="t" style="left:486.00px;top:516px;font-size:12px;line-height:14px;letter-spacing:-0.202px;">Prime Price</span>
<span class="t" style="left:636.00px;top:516px;font-size:12px;line-height:14px;letter-spacing:-1.003px;">3TECI`</span>
<span class="t" style="left:776.00px;top:516px;font-size:12px;line-height:14px;letter-spacing:-0.016px;">AA</span>
<span class="t" style="left:909.00px;top:516px;font-size:12px;line-height:14px;letter-spacing:-1.016px;">AK</span>
<span class="t" style="left:1040.00px;top:516px;font-size:12px;line-height:14px;letter-spacing:-0.672px;">AC</span>
<span class="t" style="left:557.80px;top:537px;font-size:12px;line-height:14px;letter-spacing:-0.586px;">0.00</span>
<span class="t" style="left:557.80px;top:556px;font-size:12px;line-height:14px;letter-spacing:-0.586px;">0.00</span>
<span class="t" style="left:557.80px;top:575px;font-size:12px;line-height:14px;letter-spacing:-0.586px;">0.00</span>
<span class="t" style="left:557.80px;top:594px;font-size:12px;line-height:14px;letter-spacing:-0.586px;">0.00</span>
<span class="t" style="left:530.80px;top:613px;font-size:12px;line-height:14px;letter-spacing:-0.599px;">76,162.57</span>
<span class="t" style="left:537.00px;top:632px;font-size:12px;line-height:14px;letter-spacing:-0.617px;">3,652.81</span>
<span class="t" style="left:557.80px;top:651px;font-size:12px;line-height:14px;letter-spacing:-0.586px;">0.00</span>
<span class="t" style="left:689.80px;top:537px;font-size:12px;line-height:14px;letter-spacing:-0.586px;">0.00</span>
<span class="t" style="left:689.80px;top:556px;font-size:12px;line-height:14px;letter-spacing:-0.586px;">0.00</span>
<span class="t" style="left:689.80px;top:575px;font-size:12px;line-height:14px;letter-spacing:-0.586px;">0.00</span>
<span class="t" style="left:689.80px;top:594px;font-size:12px;line-height:14px;letter-spacing:-0.586px;">0.00</span>
<span class="t" style="left:662.80px;top:613px;font-size:12px;line-height:14px;color:#fff;letter-spacing:-0.599px;">72,509.76</span>
<span class="t" style="left:689.80px;top:632px;font-size:12px;line-height:14px;letter-spacing:-0.586px;">0.00</span>
<span class="t" style="left:689.80px;top:651px;font-size:12px;line-height:14px;letter-spacing:-0.586px;">0.00</span>
<span class="t" style="left:821.80px;top:537px;font-size:12px;line-height:14px;letter-spacing:-0.586px;">0.00</span>
<span class="t" style="left:821.80px;top:556px;font-size:12px;line-height:14px;letter-spacing:-0.586px;">0.00</span>
<span class="t" style="left:821.80px;top:575px;font-size:12px;line-height:14px;letter-spacing:-0.586px;">0.00</span>
<span class="t" style="left:821.80px;top:594px;font-size:12px;line-height:14px;letter-spacing:-0.586px;">0.00</span>
<span class="t" style="left:794.80px;top:613px;font-size:12px;line-height:14px;letter-spacing:-0.599px;">77,388.00</span>
<span class="t" style="left:801.00px;top:632px;font-size:12px;line-height:14px;letter-spacing:-0.617px;">4,878.24</span>
<span class="t" style="left:821.80px;top:651px;font-size:12px;line-height:14px;letter-spacing:-0.586px;">0.00</span>
<span class="t" style="left:958.80px;top:537px;font-size:12px;line-height:14px;letter-spacing:-0.586px;">0.00</span>
<span class="t" style="left:958.80px;top:556px;font-size:12px;line-height:14px;letter-spacing:-0.586px;">0.00</span>
<span class="t" style="left:958.80px;top:575px;font-size:12px;line-height:14px;letter-spacing:-0.586px;">0.00</span>
<span class="t" style="left:958.80px;top:594px;font-size:12px;line-height:14px;letter-spacing:-0.586px;">0.00</span>
<span class="t" style="left:958.80px;top:613px;font-size:12px;line-height:14px;letter-spacing:-0.586px;">0.00</span>
<span class="t" style="left:958.80px;top:632px;font-size:12px;line-height:14px;letter-spacing:-0.586px;">0.00</span>
<span class="t" style="left:958.80px;top:651px;font-size:12px;line-height:14px;letter-spacing:-0.586px;">0.00</span>
<span class="t" style="left:1085.80px;top:537px;font-size:12px;line-height:14px;letter-spacing:-0.586px;">0.00</span>
<span class="t" style="left:1085.80px;top:556px;font-size:12px;line-height:14px;letter-spacing:-0.586px;">0.00</span>
<span class="t" style="left:1085.80px;top:575px;font-size:12px;line-height:14px;letter-spacing:-0.586px;">0.00</span>
<span class="t" style="left:1085.80px;top:594px;font-size:12px;line-height:14px;letter-spacing:-0.586px;">0.00</span>
<span class="t" style="left:1085.80px;top:613px;font-size:12px;line-height:14px;letter-spacing:-0.586px;">0.00</span>
<span class="t" style="left:1085.80px;top:632px;font-size:12px;line-height:14px;letter-spacing:-0.586px;">0.00</span>
<span class="t" style="left:1085.80px;top:651px;font-size:12px;line-height:14px;letter-spacing:-0.586px;">0.00</span>
<span class="t" style="left:1217.80px;top:537px;font-size:12px;line-height:14px;letter-spacing:-0.586px;">0.00</span>
<span class="t" style="left:1217.80px;top:556px;font-size:12px;line-height:14px;letter-spacing:-0.586px;">0.00</span>
<span class="t" style="left:1217.80px;top:575px;font-size:12px;line-height:14px;letter-spacing:-0.586px;">0.00</span>
<span class="t" style="left:1217.80px;top:594px;font-size:12px;line-height:14px;letter-spacing:-0.586px;">0.00</span>
<span class="t" style="left:1217.80px;top:613px;font-size:12px;line-height:14px;letter-spacing:-0.586px;">0.00</span>
<span class="t" style="left:1217.80px;top:632px;font-size:12px;line-height:14px;letter-spacing:-0.586px;">0.00</span>
<span class="t" style="left:1217.80px;top:651px;font-size:12px;line-height:14px;letter-spacing:-0.586px;">0.00</span>
<span class="t" style="left:1349.80px;top:537px;font-size:12px;line-height:14px;letter-spacing:-0.586px;">0.00</span>
<span class="t" style="left:1349.80px;top:556px;font-size:12px;line-height:14px;letter-spacing:-0.586px;">0.00</span>
<span class="t" style="left:1349.80px;top:575px;font-size:12px;line-height:14px;letter-spacing:-0.586px;">0.00</span>
<span class="t" style="left:1349.80px;top:594px;font-size:12px;line-height:14px;letter-spacing:-0.586px;">0.00</span>
<span class="t" style="left:1349.80px;top:613px;font-size:12px;line-height:14px;letter-spacing:-0.586px;">0.00</span>
<span class="t" style="left:1349.80px;top:632px;font-size:12px;line-height:14px;letter-spacing:-0.586px;">0.00</span>
<span class="t" style="left:1349.80px;top:651px;font-size:12px;line-height:14px;letter-spacing:-0.586px;">0.00</span>
<span class="t" style="left:1486.80px;top:537px;font-size:12px;line-height:14px;letter-spacing:-0.586px;">0.00</span>
<span class="t" style="left:1486.80px;top:556px;font-size:12px;line-height:14px;letter-spacing:-0.586px;">0.00</span>
<span class="t" style="left:1486.80px;top:575px;font-size:12px;line-height:14px;letter-spacing:-0.586px;">0.00</span>
<span class="t" style="left:1486.80px;top:594px;font-size:12px;line-height:14px;letter-spacing:-0.586px;">0.00</span>
<span class="t" style="left:1486.80px;top:613px;font-size:12px;line-height:14px;letter-spacing:-0.586px;">0.00</span>
<span class="t" style="left:1486.80px;top:632px;font-size:12px;line-height:14px;letter-spacing:-0.586px;">0.00</span>
<span class="t" style="left:1486.80px;top:651px;font-size:12px;line-height:14px;letter-spacing:-0.586px;">0.00</span>
</body>
</html>
